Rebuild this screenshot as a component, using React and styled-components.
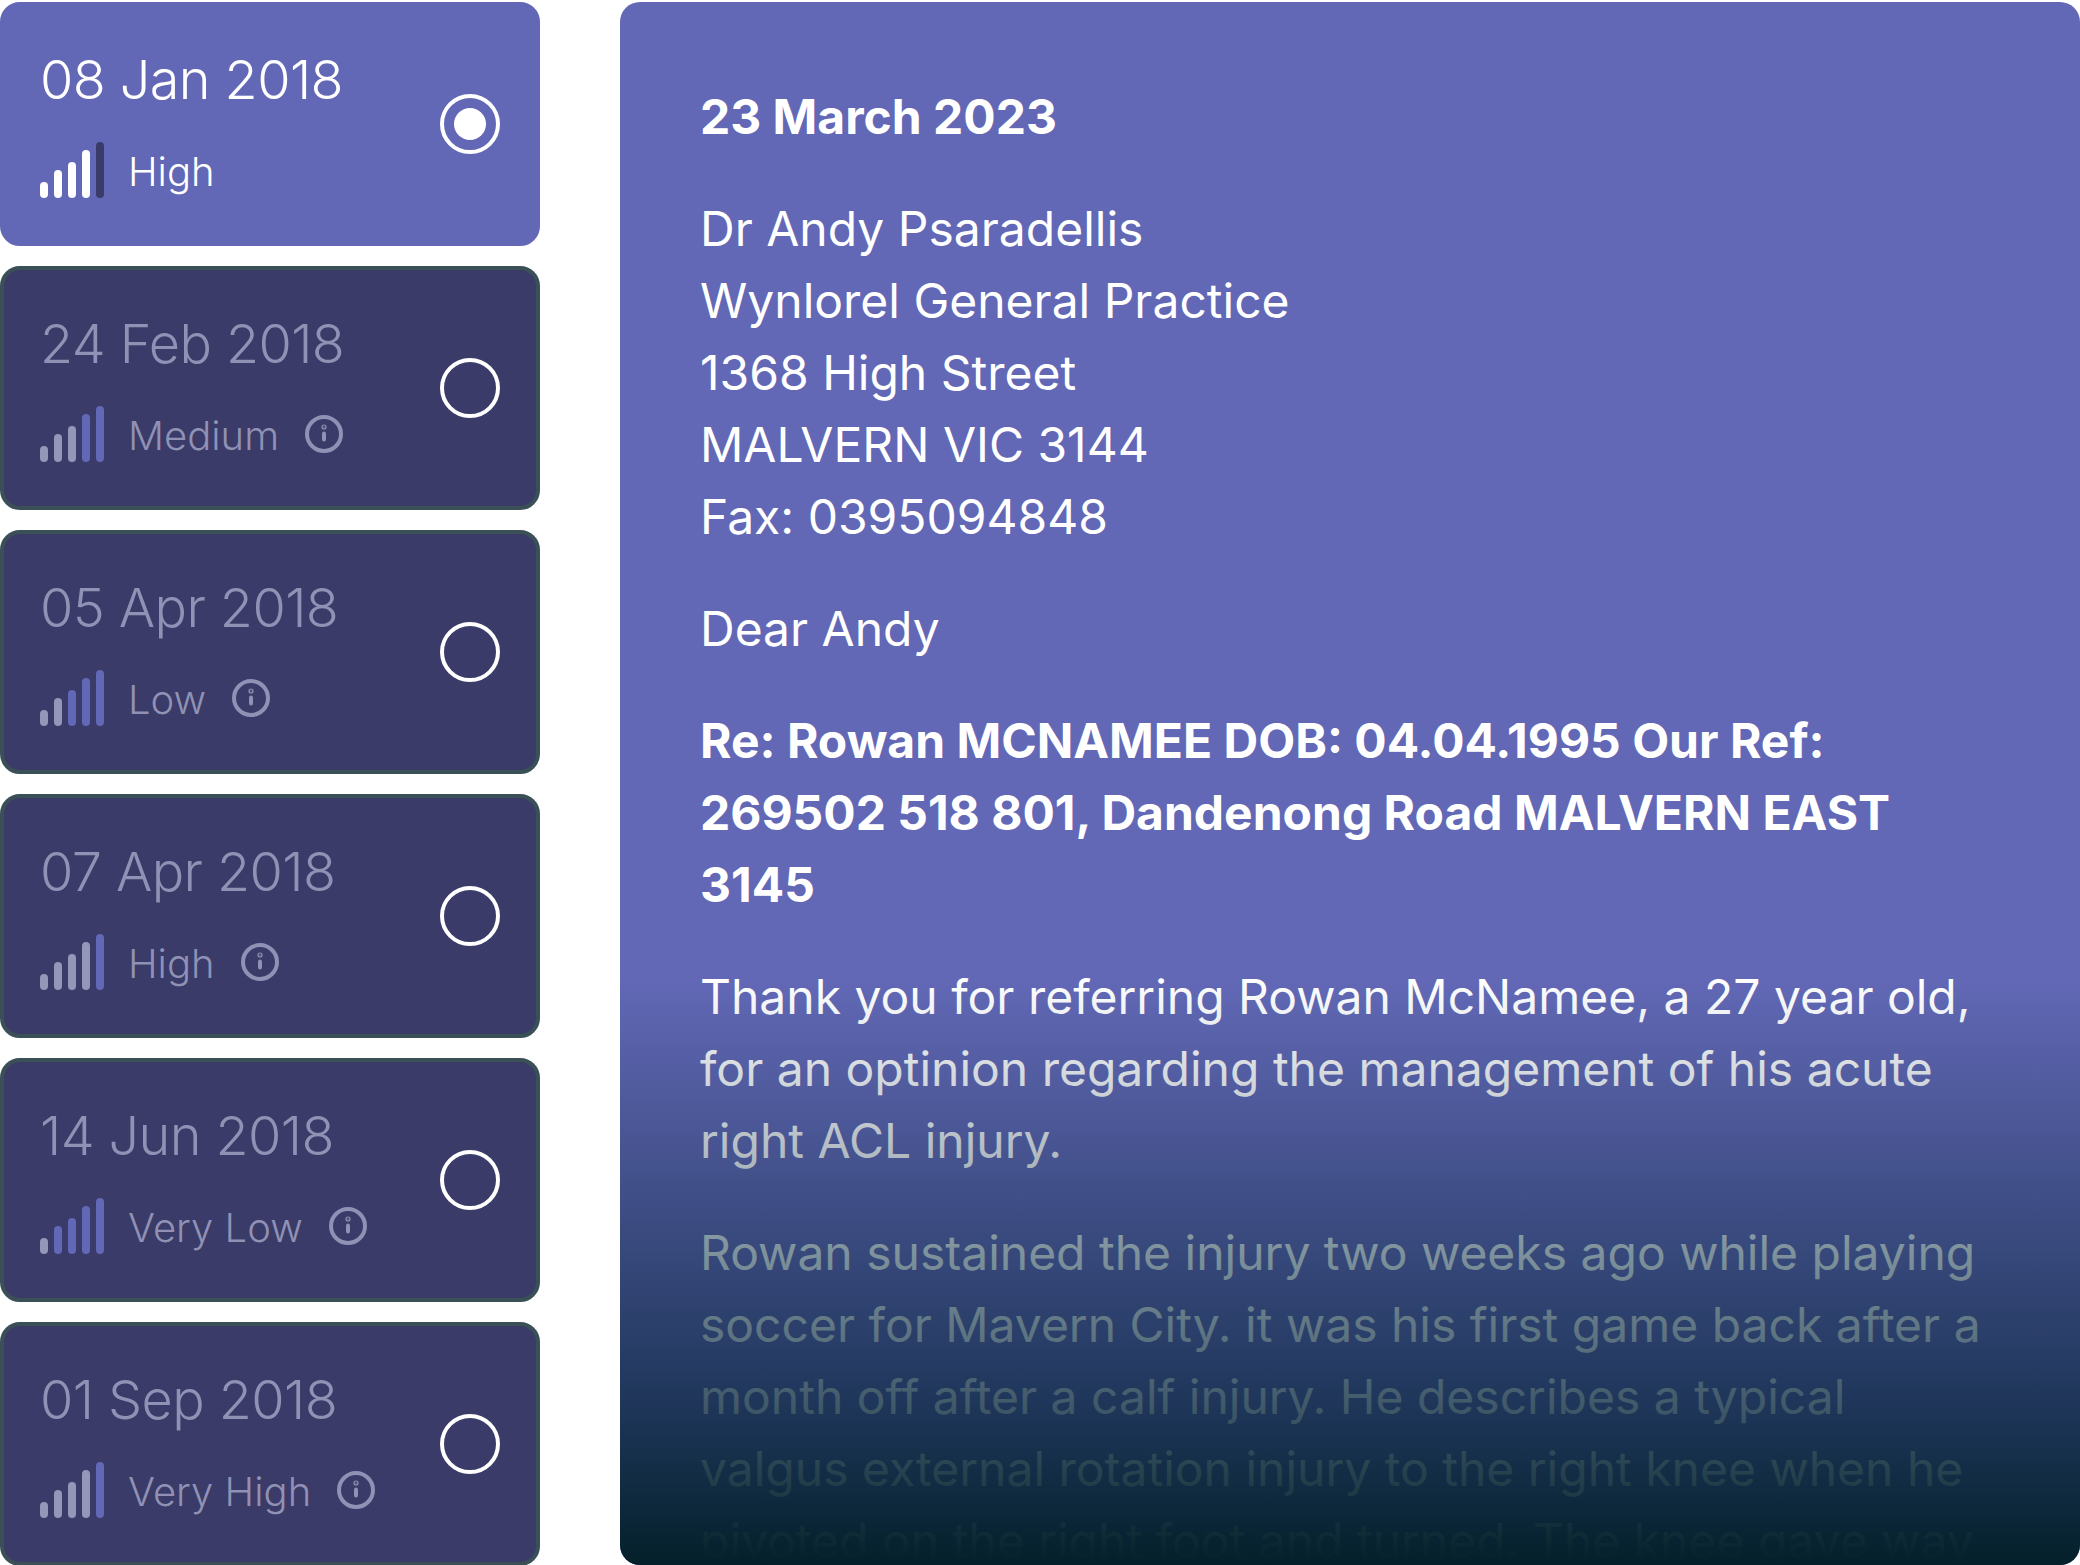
import React from 'react';
import styled, { createGlobalStyle } from 'styled-components';

const GlobalStyle = createGlobalStyle`
  html, body {
    margin: 0;
    background: #fff;
  }
  body {
    font-family: 'Inter', 'Liberation Sans', sans-serif;
  }
`;

const Page = styled.div`
  display: flex;
  gap: 80px;
  width: 2080px;
  height: 1565px;
  padding-top: 2px;
  box-sizing: border-box;
  overflow: hidden;
`;

const List = styled.div`
  display: flex;
  flex-direction: column;
  gap: 20px;
  flex: 0 0 540px;
`;

const Card = styled.div`
  display: flex;
  align-items: center;
  justify-content: space-between;
  flex: 0 0 244px;
  box-sizing: border-box;
  padding: 0 36px;
  border: 4px solid ${p => (p.$active ? '#6268b6' : '#3a5056')};
  border-radius: 20px;
  background: ${p => (p.$active ? '#6268b6' : '#3a3b68')};
  color: ${p => (p.$active ? '#fff' : '#9091b4')};
`;

const Info = styled.div`
  display: flex;
  flex-direction: column;
  gap: 28px;
`;

const DateText = styled.div`
  margin-top: -2px;
  margin-bottom: 2px;
  font-size: 54px;
  font-weight: 350;
  letter-spacing: -0.6px;
  line-height: 64px;
`;

const Meta = styled.div`
  display: flex;
  align-items: flex-end;
  height: 56px;
`;

const Bars = styled.div`
  display: flex;
  align-items: flex-end;
  gap: 6px;
  margin-right: 24px;
`;

const Bar = styled.span`
  display: block;
  width: 8px;
  height: ${p => p.$height}px;
  border-radius: 4px;
  background: ${p => p.$color};
`;

const Level = styled.span`
  margin-bottom: 1px;
  font-size: 40px;
  font-weight: 350;
  line-height: 50px;
`;

const InfoIcon = styled.svg`
  width: 38px;
  height: 38px;
  margin-left: 26px;
  margin-bottom: 9px;
`;

const Radio = styled.div`
  display: flex;
  align-items: center;
  justify-content: center;
  width: 60px;
  height: 60px;
  box-sizing: border-box;
  border: 4px solid #fff;
  border-radius: 50%;
  &::after {
    content: '';
    display: ${p => (p.$checked ? 'block' : 'none')};
    width: 32px;
    height: 32px;
    border-radius: 50%;
    background: #fff;
  }
`;

const Letter = styled.div`
  position: relative;
  flex: 1;
  box-sizing: border-box;
  height: 1563px;
  padding: 79px 90px 0 80px;
  border-radius: 20px;
  background: #6268b6;
  color: #fff;
  font-size: 48px;
  line-height: 72px;
  overflow: hidden;
`;

const Paragraph = styled.p`
  margin: 0 0 40px;
  font-weight: ${p => (p.$bold ? 700 : 400)};
  color: ${p => (p.$tint ? '#eef9f8' : '#fff')};
`;

const Fade = styled.div`
  position: absolute;
  left: 0;
  right: 0;
  top: 976px;
  height: 587px;
  background: linear-gradient(180deg, rgba(3, 32, 42, 0) 0%, rgba(9, 38, 60, 0.75) 72%, #03202a 100%);
`;

const barHeights = [16, 28, 36, 48, 56];

const entries = [
  { date: '08 Jan 2018', level: 'High', filled: 4, active: true },
  { date: '24 Feb 2018', level: 'Medium', filled: 3 },
  { date: '05 Apr 2018', level: 'Low', filled: 2 },
  { date: '07 Apr 2018', level: 'High', filled: 4 },
  { date: '14 Jun 2018', level: 'Very Low', filled: 1 },
  { date: '01 Sep 2018', level: 'Very High', filled: 4 },
];

const barColor = (index, filled, active) => {
  if (active) return index < filled ? '#fff' : '#3a3b68';
  return index < filled ? '#9597b9' : '#6268b6';
};

const Entry = ({ date, level, filled, active }) => (
  <Card $active={active}>
    <Info>
      <DateText>{date}</DateText>
      <Meta>
        <Bars>
          {barHeights.map((height, i) => (
            <Bar key={height} $height={height} $color={barColor(i, filled, active)} />
          ))}
        </Bars>
        <Level>{level}</Level>
        {!active && (
          <InfoIcon viewBox="0 0 38 38" fill="none" stroke="currentColor" strokeWidth="4" strokeLinecap="round">
            <circle cx="19" cy="19" r="17" />
            <path d="M19 18.5v6" />
            <circle cx="19" cy="12" r="0.6" fill="currentColor" />
          </InfoIcon>
        )}
      </Meta>
    </Info>
    <Radio $checked={active} />
  </Card>
);

export default function App() {
  return (
    <>
      <GlobalStyle />
      <Page>
        <List>
          {entries.map(entry => (
            <Entry key={entry.date} {...entry} />
          ))}
        </List>
        <Letter>
          <Paragraph $bold>23 March 2023</Paragraph>
          <Paragraph>
            Dr Andy Psaradellis
            <br />
            Wynlorel General Practice
            <br />
            1368 High Street
            <br />
            MALVERN VIC 3144
            <br />
            Fax: 0395094848
          </Paragraph>
          <Paragraph>Dear Andy</Paragraph>
          <Paragraph $bold>
            Re: Rowan MCNAMEE DOB: 04.04.1995 Our Ref: 269502 518 801, Dandenong Road MALVERN EAST 3145
          </Paragraph>
          <Paragraph>
            Thank you for referring Rowan McNamee, a 27 year old, for an optinion regarding the management of his acute right ACL injury.
          </Paragraph>
          <Paragraph $tint>
            Rowan sustained the injury two weeks ago while playing soccer for Mavern City. it was his first game back after a month off after a calf injury. He describes a typical valgus external rotation injury to the right knee when he pivoted on the right foot and turned. The knee gave way
          </Paragraph>
          <Fade />
        </Letter>
      </Page>
    </>
  );
}
